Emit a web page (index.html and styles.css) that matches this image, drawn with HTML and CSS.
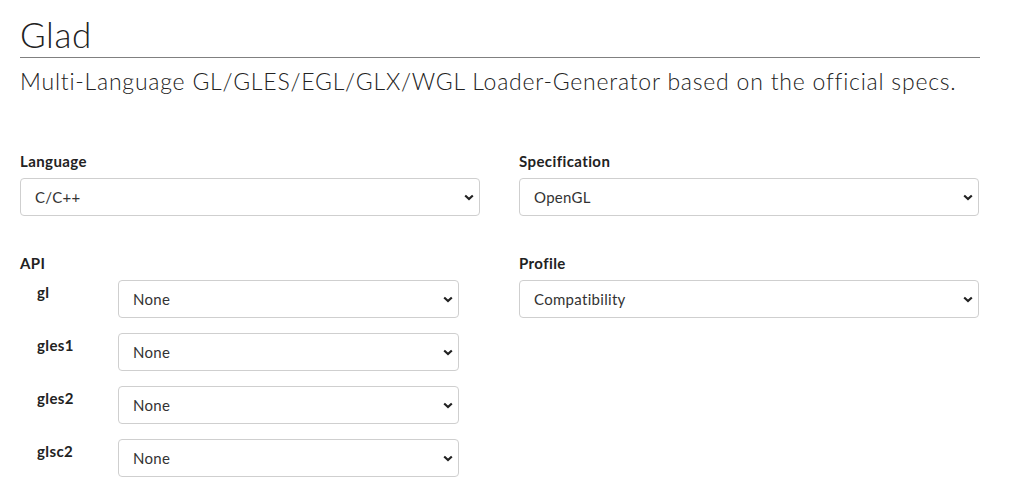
FILE: index.html
```html
<!DOCTYPE html>
<html>
<head>
<meta charset="utf-8">
<link rel="stylesheet" href="styles.css">
</head>
<body>
<div class="container">
  <header class="page-header">
    <h1 class="title">Glad</h1>
    <p class="lead">Multi-Language GL/GLES/EGL/GLX/WGL Loader-Generator based on the official specs.</p>
  </header>
  <div class="grid">
    <div class="field">
      <label class="label">Language</label>
      <div class="select"><span>C/C++</span></div>
    </div>
    <div class="field">
      <label class="label">Specification</label>
      <div class="select"><span>OpenGL</span></div>
    </div>
    <div class="field">
      <label class="label">API</label>
      <div class="api-rows">
        <div class="api-row"><span class="sub-label">gl</span><div class="select"><span>None</span></div></div>
        <div class="api-row"><span class="sub-label">gles1</span><div class="select"><span>None</span></div></div>
        <div class="api-row"><span class="sub-label">gles2</span><div class="select"><span>None</span></div></div>
        <div class="api-row"><span class="sub-label">glsc2</span><div class="select"><span>None</span></div></div>
      </div>
    </div>
    <div class="field">
      <label class="label">Profile</label>
      <div class="select"><span>Compatibility</span></div>
    </div>
  </div>
</div>
</body>
</html>
```

FILE: styles.css
```css
html, body {
  margin: 0;
  padding: 0;
  background: #fff;
}
body {
  font-family: "Lato", "Open Sans", sans-serif;
  color: #2c2c2c;
}
.container {
  width: 960px;
  margin-left: 20px;
}
.page-header {
  padding-top: 12px;
}
.title {
  margin: 0;
  font-weight: 300;
  font-size: 35px;
  line-height: 45px;
  letter-spacing: 0.6px;
  color: #222;
  border-bottom: 1px solid #808080;
}
.lead {
  margin: 8px 0 0;
  font-weight: 300;
  font-size: 23px;
  line-height: 30px;
  letter-spacing: 0.78px;
  color: #222;
}
.grid {
  display: grid;
  grid-template-columns: 460px 460px;
  column-gap: 39px;
  row-gap: 37px;
  margin-top: 55px;
}
.field {
  display: flex;
  flex-direction: column;
}
.label {
  font-weight: 700;
  font-size: 15px;
  line-height: 20px;
  letter-spacing: 0.4px;
  color: #222;
  margin-bottom: 7px;
}
.select {
  height: 36px;
  border: 1px solid #cfcfcf;
  border-radius: 4px;
  box-sizing: content-box;
  display: flex;
  align-items: center;
  padding: 0 14px;
  font-size: 15px;
  letter-spacing: 0.3px;
  color: #333;
  background: #fff url("data:image/svg+xml;utf8,<svg xmlns='http://www.w3.org/2000/svg' width='10' height='7' viewBox='0 0 10 7'><path d='M1.2 1.5 L5 5 L8.8 1.5' fill='none' stroke='%23222' stroke-width='2.2'/></svg>") no-repeat right 5px center;
}
.api-rows {
  display: flex;
  flex-direction: column;
  gap: 15px;
  width: 439px;
}
.api-row {
  display: grid;
  grid-template-columns: 98px 1fr;
}
.sub-label {
  font-weight: 700;
  font-size: 15px;
  line-height: 20px;
  letter-spacing: 0.4px;
  padding-left: 17px;
  padding-top: 2px;
  color: #222;
}
```
